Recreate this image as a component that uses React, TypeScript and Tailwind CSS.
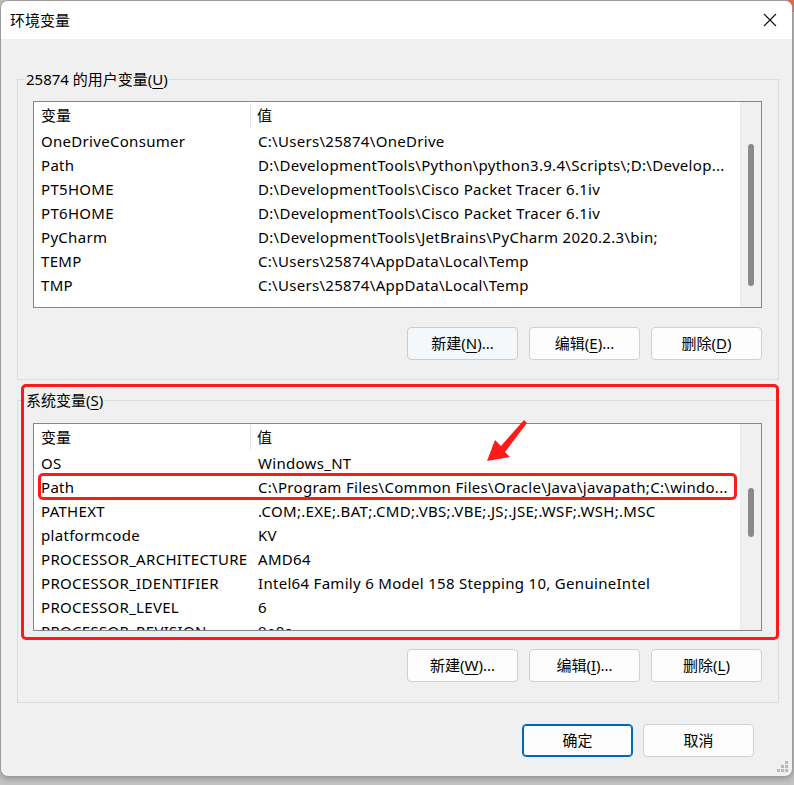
import React from "react";

const FONT = { fontFamily: '"Noto Sans", "Noto Sans CJK SC", sans-serif' };

type Row = [string, string];

const userRows: Row[] = [
  ["OneDriveConsumer", "C:\\Users\\25874\\OneDrive"],
  ["Path", "D:\\DevelopmentTools\\Python\\python3.9.4\\Scripts\\;D:\\Develop..."],
  ["PT5HOME", "D:\\DevelopmentTools\\Cisco Packet Tracer 6.1iv"],
  ["PT6HOME", "D:\\DevelopmentTools\\Cisco Packet Tracer 6.1iv"],
  ["PyCharm", "D:\\DevelopmentTools\\JetBrains\\PyCharm 2020.2.3\\bin;"],
  ["TEMP", "C:\\Users\\25874\\AppData\\Local\\Temp"],
  ["TMP", "C:\\Users\\25874\\AppData\\Local\\Temp"],
];

const sysRows: Row[] = [
  ["OS", "Windows_NT"],
  ["Path", "C:\\Program Files\\Common Files\\Oracle\\Java\\javapath;C:\\windo..."],
  ["PATHEXT", ".COM;.EXE;.BAT;.CMD;.VBS;.VBE;.JS;.JSE;.WSF;.WSH;.MSC"],
  ["platformcode", "KV"],
  ["PROCESSOR_ARCHITECTURE", "AMD64"],
  ["PROCESSOR_IDENTIFIER", "Intel64 Family 6 Model 158 Stepping 10, GenuineIntel"],
  ["PROCESSOR_LEVEL", "6"],
  ["PROCESSOR_REVISION", "9e0a"],
];

function ListView({
  rows,
  height,
  thumbTop,
  thumbHeight,
}: {
  rows: Row[];
  height: number;
  thumbTop: number;
  thumbHeight: number;
}) {
  return (
    <div
      className="relative flex border border-[#828790] bg-white overflow-hidden"
      style={{ height }}
    >
      <div className="flex-1 flex flex-col overflow-hidden">
        <div className="flex h-[27px] shrink-0 items-center text-[15px] text-black">
          <div className="w-[217px] shrink-0 pl-[7px] border-r border-[#e5e5e5] h-[25px] flex items-center">
            变量
          </div>
          <div className="pl-[6px]">值</div>
        </div>
        {rows.map(([k, v], i) => (
          <div
            key={i}
            className="flex h-[24px] shrink-0 items-center text-[15px] tracking-[0.3px] text-black whitespace-nowrap"
          >
            <div className="w-[217px] shrink-0 pl-[7px] overflow-hidden">{k}</div>
            <div className="pl-[7px] overflow-hidden">{v}</div>
          </div>
        ))}
      </div>
      <div className="relative w-[21px] shrink-0 bg-[#f0f0f0] border-l border-[#ececec]">
        <div
          className="absolute left-[7px] w-[6px] rounded-[3px] bg-[#8a8a8a]"
          style={{ top: thumbTop, height: thumbHeight }}
        />
      </div>
    </div>
  );
}

function Btn({
  children,
  primary,
  hover,
}: {
  children: React.ReactNode;
  primary?: boolean;
  hover?: boolean;
}) {
  return (
    <button
      className={
        "w-[111px] h-[33px] rounded-[4px] text-[15px] text-black flex items-center justify-center " +
        (primary
          ? "border border-[#0067c0] bg-[#fdfdfd] shadow-[inset_0_0_0_1px_#0067c0]"
          : hover
          ? "border border-[#c9ccd1] bg-[#f5f8fb]"
          : "border border-[#d0d0d0] bg-[#fdfdfd]")
      }
    >
      {children}
    </button>
  );
}

function U({ c }: { c: string }) {
  return <span className="underline underline-offset-[3px]">{c}</span>;
}

export default function App() {
  return (
    <div className="relative w-[794px] h-[785px] overflow-hidden bg-[#c4c4c4]" style={FONT}>
      <div className="absolute right-0 top-0 w-[30px] h-[12px] bg-[#d9735a]" />
      <div className="relative w-[793px] h-[777px] rounded-t-[8px] rounded-b-[8px] overflow-hidden border border-[#9c9c9c] bg-[#f0f0f0] flex flex-col shadow-[0_2px_6px_rgba(0,0,0,0.25)]">
        {/* title bar */}
        <div className="h-[38px] shrink-0 bg-white flex items-center justify-between pl-[9px] pr-[14px]">
          <span className="text-[15px] text-black">环境变量</span>
          <svg width="14" height="14" viewBox="0 0 14 14" className="mr-[1px]">
            <path d="M1 1L13 13M13 1L1 13" stroke="#111" strokeWidth="1.1" />
          </svg>
        </div>

        {/* user variables */}
        <fieldset className="mt-[30px] ml-[16px] w-[762px] border border-[#dcdcdc] px-[15px] pb-[19px]">
          <legend className="-ml-[8px] px-[1px] text-[15px] leading-[20px] text-black">
            25874 的用户变量(<U c="U" />)
          </legend>
          <div className="mt-[12px] mr-[1px]">
            <ListView rows={userRows} height={207} thumbTop={42} thumbHeight={142} />
          </div>
          <div className="mt-[19px] flex justify-end gap-[11px] pr-[1px]">
            <Btn hover>
              新建(<U c="N" />)...
            </Btn>
            <Btn>
              编辑(<U c="E" />)...
            </Btn>
            <Btn>
              删除(<U c="D" />)
            </Btn>
          </div>
        </fieldset>

        {/* system variables */}
        <fieldset className="mt-[10px] ml-[16px] w-[762px] border border-[#dcdcdc] px-[15px] pb-[20px]">
          <legend className="-ml-[8px] px-[1px] text-[15px] leading-[20px] text-black">
            系统变量(<U c="S" />)
          </legend>
          <div className="mt-[13px] mr-[1px]">
            <ListView rows={sysRows} height={208} thumbTop={64} thumbHeight={49} />
          </div>
          <div className="mt-[18px] flex justify-end gap-[11px] pr-[1px]">
            <Btn>
              新建(<U c="W" />)...
            </Btn>
            <Btn>
              编辑(<U c="I" />)...
            </Btn>
            <Btn>
              删除(<U c="L" />)
            </Btn>
          </div>
        </fieldset>

        {/* OK / Cancel */}
        <div className="mt-[21px] flex justify-end gap-[10px] pr-[38px]">
          <Btn primary>确定</Btn>
          <Btn>取消</Btn>
        </div>

        {/* size grip */}
        <svg width="12" height="12" className="absolute right-[3px] bottom-[3px]" viewBox="0 0 12 12">
          {[
            [8, 0],
            [4, 4],
            [8, 4],
            [0, 8],
            [4, 8],
            [8, 8],
          ].map(([x, y], i) => (
            <rect key={i} x={x} y={y} width="3" height="3" fill="#b9b9b9" />
          ))}
        </svg>
      </div>

      {/* red annotations */}
      <div className="absolute left-[21px] top-[384px] w-[758px] h-[256px] border-[3px] border-[#ff1a1a] rounded-[5px] pointer-events-none" />
      <div className="absolute left-[38px] top-[473px] w-[699px] h-[27px] border-[3px] border-[#ff1a1a] rounded-[5px] pointer-events-none" />
      <svg className="absolute left-0 top-0 pointer-events-none" width="794" height="785">
        <polygon
          points="524,420 527,423 505,452 510,457 487,461 495,440 501,446"
          fill="#ff1a1a"
        />
      </svg>
    </div>
  );
}
